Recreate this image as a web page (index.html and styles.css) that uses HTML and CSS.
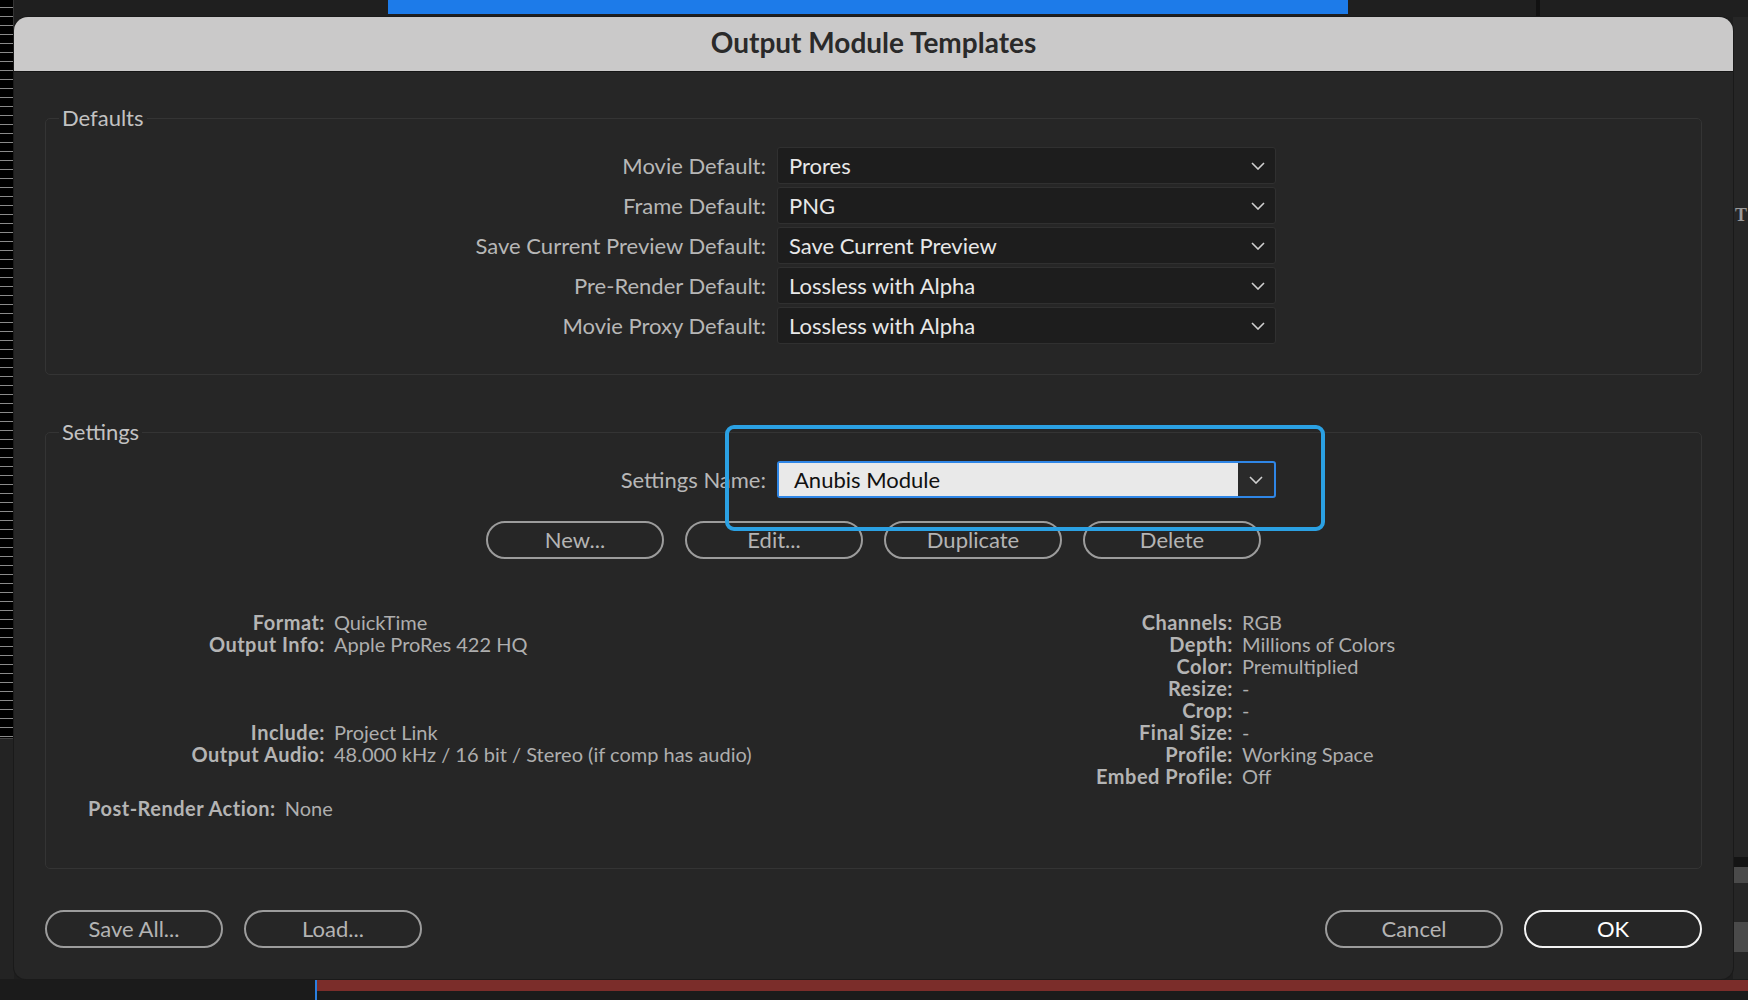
FILE: index.html
```html
<!DOCTYPE html>
<html>
<head>
<meta charset="utf-8">
<title>Output Module Templates</title>
<link rel="stylesheet" href="styles.css">
</head>
<body>
<div class="desktop">
  <div class="top-strip"><div class="blue-tab"></div><div class="top-sep"></div></div>
  <div class="left-ruler"></div>
  <div class="left-tools"></div>
  <div class="right-strip"><span class="tglyph">T</span><div class="band b1"></div><div class="band b2"></div><div class="band b3"></div></div>
  <div class="bottom-strip"><div class="red-bar"></div><div class="cti"></div></div>

  <div class="dialog">
    <div class="titlebar">Output Module Templates</div>
    <div class="dialog-body">
      <fieldset class="group defaults">
        <legend>Defaults</legend>
        <div class="form-grid">
          <label class="flabel">Movie Default:</label>
          <div class="select"><span>Prores</span><svg class="chev" viewBox="0 0 14 8"><path d="M1 1l6 6 6-6"/></svg></div>
          <label class="flabel">Frame Default:</label>
          <div class="select"><span>PNG</span><svg class="chev" viewBox="0 0 14 8"><path d="M1 1l6 6 6-6"/></svg></div>
          <label class="flabel">Save Current Preview Default:</label>
          <div class="select"><span>Save Current Preview</span><svg class="chev" viewBox="0 0 14 8"><path d="M1 1l6 6 6-6"/></svg></div>
          <label class="flabel">Pre-Render Default:</label>
          <div class="select"><span>Lossless with Alpha</span><svg class="chev" viewBox="0 0 14 8"><path d="M1 1l6 6 6-6"/></svg></div>
          <label class="flabel">Movie Proxy Default:</label>
          <div class="select"><span>Lossless with Alpha</span><svg class="chev" viewBox="0 0 14 8"><path d="M1 1l6 6 6-6"/></svg></div>
        </div>
      </fieldset>

      <fieldset class="group settings">
        <legend>Settings</legend>
        <div class="form-grid">
          <label class="flabel">Settings Name:</label>
          <div class="combo">
            <div class="combo-field">Anubis Module</div>
            <div class="combo-btn"><svg class="chev" viewBox="0 0 14 8"><path d="M1 1l6 6 6-6"/></svg></div>
            <div class="highlight"></div>
          </div>
        </div>
        <div class="btn-row">
          <button class="pill">New...</button>
          <button class="pill">Edit...</button>
          <button class="pill">Duplicate</button>
          <button class="pill">Delete</button>
        </div>
        <div class="info">
          <div class="info-left">
            <span class="k">Format:</span><span class="v">QuickTime</span>
            <span class="k">Output Info:</span><span class="v">Apple ProRes 422 HQ</span>
            <span class="k">&nbsp;</span><span class="v"></span>
            <span class="k">&nbsp;</span><span class="v"></span>
            <span class="k">&nbsp;</span><span class="v"></span>
            <span class="k">Include:</span><span class="v">Project Link</span>
            <span class="k">Output Audio:</span><span class="v">48.000 kHz / 16 bit / Stereo (if comp has audio)</span>
          </div>
          <div class="info-right">
            <span class="k">Channels:</span><span class="v">RGB</span>
            <span class="k">Depth:</span><span class="v">Millions of Colors</span>
            <span class="k">Color:</span><span class="v">Premultiplied</span>
            <span class="k">Resize:</span><span class="v">-</span>
            <span class="k">Crop:</span><span class="v">-</span>
            <span class="k">Final Size:</span><span class="v">-</span>
            <span class="k">Profile:</span><span class="v">Working Space</span>
            <span class="k">Embed Profile:</span><span class="v">Off</span>
          </div>
        </div>
        <div class="post-render"><span class="k">Post-Render Action:</span><span class="v">None</span></div>
      </fieldset>

      <div class="footer">
        <div class="footer-group">
          <button class="pill">Save All...</button>
          <button class="pill">Load...</button>
        </div>
        <div class="footer-group">
          <button class="pill">Cancel</button>
          <button class="pill primary">OK</button>
        </div>
      </div>
    </div>
  </div>
</div>
</body>
</html>
```

FILE: styles.css
```css
* { box-sizing: border-box; }
html, body { margin: 0; padding: 0; }
body {
  width: 1748px;
  height: 1000px;
  overflow: hidden;
  background: #1e1e1e;
  font-family: Lato, "Open Sans", sans-serif;
}
.desktop { position: relative; width: 1748px; height: 1000px; }

.top-strip { position: absolute; left: 0; top: 0; width: 1748px; height: 17px; background: #1f1f1f; }
.blue-tab { position: absolute; left: 388px; top: 0; width: 960px; height: 14px; background: #1d7be9; }
.top-sep { position: absolute; left: 1536px; top: 0; width: 4px; height: 17px; background: #111; }

.left-ruler {
  position: absolute; left: 0; top: 0; width: 14px; height: 738px;
  background-color: #000;
  background-image:
    repeating-linear-gradient(to bottom, transparent 0 7px, #8a8a8a 7px 8px, transparent 8px 9px),
    linear-gradient(to right, transparent 0 9px, #000 9px);
  background-size: 14px 9px, 14px 100%;
  border-right: 1px solid #333;
}
.left-tools { position: absolute; left: 0; top: 738px; width: 14px; height: 262px; background: #232323; border-top: 1px solid #444; }

.right-strip { position: absolute; left: 1733px; top: 17px; width: 15px; height: 983px; background: #262626; }
.tglyph { position: absolute; left: 2px; top: 188px; color: #999; font-family: "Liberation Serif", serif; font-size: 18px; font-weight: bold; }
.band { position: absolute; left: 0; width: 15px; background: #4a4a4a; }
.b1 { top: 840px; height: 10px; background: #141414; }
.b2 { top: 850px; height: 16px; }
.b3 { top: 905px; height: 30px; }

.bottom-strip { position: absolute; left: 0; top: 979px; width: 1748px; height: 21px; background: #1b1b1b; }
.red-bar { position: absolute; left: 315px; top: 1px; width: 1433px; height: 11px; background: #7b2d2a; }
.cti { position: absolute; left: 315px; top: 0; width: 2px; height: 21px; background: #2b7fe0; }

.dialog {
  position: absolute;
  left: 14px; top: 17px;
  width: 1719px; height: 962px;
  background: #262626;
  border-radius: 14px 14px 12px 12px;
  overflow: hidden;
  box-shadow: 0 0 0 1px #1a1a1a;
}
.titlebar {
  height: 55px;
  background: #cac9c9;
  border-bottom: 1px solid #151515;
  color: #2a2a2a;
  font-size: 28px;
  font-weight: 700;
  display: flex;
  align-items: center;
  justify-content: center;
  padding-bottom: 4px;
}
.dialog-body { padding: 34px 31px 0 31px; }

.group {
  margin: 0;
  border: 1px solid #343434;
  border-radius: 5px;
  padding: 17px 0 30px 0;
  min-width: 0;
}
.group legend {
  margin-left: 13px;
  padding: 0 3px;
  color: #c2c2c2;
  font-size: 22px;
  line-height: 24px;
}
.settings { margin-top: 45px; padding-bottom: 49px; }

.form-grid {
  display: grid;
  grid-template-columns: 720px 499px;
  column-gap: 11px;
  row-gap: 3px;
  align-items: center;
}
.flabel {
  text-align: right;
  color: #b7b7b7;
  font-size: 22px;
}
.select {
  height: 37px;
  background: #1d1d1d;
  border: 1px solid #303030;
  border-radius: 3px;
  display: flex;
  align-items: center;
  justify-content: space-between;
  padding: 0 10px 0 11px;
  color: #e8e8e8;
  font-size: 22px;
}
.chev { width: 14px; height: 8px; fill: none; stroke: #d0d0d0; stroke-width: 1.6; }

.combo {
  position: relative;
  height: 37px;
  display: flex;
  border: 2px solid #2f86e6;
  border-radius: 3px;
  background: #2a2a2a;
}
.combo-field {
  flex: 1;
  background: #e9e9e9;
  color: #111;
  font-size: 22px;
  display: flex;
  align-items: center;
  padding-left: 15px;
}
.combo-btn { width: 36px; display: flex; align-items: center; justify-content: center; }
.highlight {
  position: absolute;
  left: -54px; top: -38px; right: -51px; bottom: -35px;
  border: 4px solid #2ba1e3;
  border-radius: 9px;
  pointer-events: none;
  z-index: 2;
}

.btn-row {
  display: flex;
  justify-content: center;
  gap: 21px;
  margin-top: 23px;
}
.pill {
  width: 178px;
  height: 38px;
  border: 2px solid #9c9c9c;
  border-radius: 20px;
  background: transparent;
  color: #b4b4b4;
  font-family: Lato, "Open Sans", sans-serif;
  font-size: 22px;
  padding: 0 0 2px 0;
}
.pill.primary { border-color: #f2f2f2; color: #ffffff; }

.info {
  display: flex;
  align-items: flex-start;
  margin-top: 52px;
  font-size: 20px;
  line-height: 22px;
}
.info-left, .info-right {
  display: grid;
  column-gap: 9px;
}
.info-left { grid-template-columns: 279px 699px; }
.info-right { grid-template-columns: 200px auto; }
.k { text-align: right; font-weight: 700; color: #b4b4b4; letter-spacing: 0.5px; }
.v { color: #aeaeae; }
.post-render {
  display: flex;
  gap: 9px;
  margin-top: 10px;
  padding-left: 42px;
  font-size: 20px;
  line-height: 22px;
}

.footer {
  display: flex;
  justify-content: space-between;
  margin-top: 41px;
}
.footer-group { display: flex; gap: 21px; }
```
